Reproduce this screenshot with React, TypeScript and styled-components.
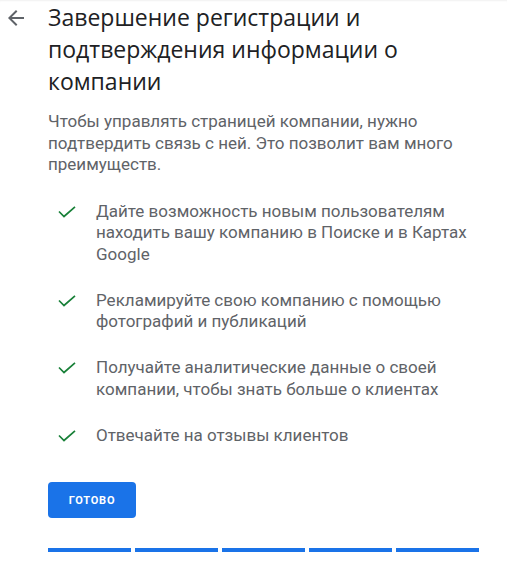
import React from 'react'
import styled, { createGlobalStyle } from 'styled-components'

const GlobalStyle = createGlobalStyle`
  html, body {
    margin: 0;
    padding: 0;
    background: #fff;
  }
`

const Page = styled.div`
  display: grid;
  grid-template-columns: 48px 431px;
  width: 507px;
  height: 562px;
  overflow: hidden;
  background: #fff;
  box-shadow: inset 0 2px 2px -1px rgba(0, 0, 0, 0.06);
`

const BackButton = styled.button`
  align-self: start;
  width: 24px;
  height: 24px;
  margin: 6px 0 0 4px;
  padding: 0;
  border: 0;
  background: none;
  color: #5f6368;
  cursor: pointer;
`

const Content = styled.div`
  display: flex;
  flex-direction: column;
`

const Title = styled.h1`
  margin: 0;
  padding-top: 1px;
  font-family: 'Open Sans', sans-serif;
  font-size: 23px;
  font-weight: 400;
  line-height: 32px;
  color: #202124;
`

const Lead = styled.p`
  margin: 14px 0 0;
  font-family: Roboto, sans-serif;
  font-size: 17px;
  line-height: 21.5px;
  color: #5f6368;
`

const Benefits = styled.ul`
  list-style: none;
  margin: 25px 0 0;
  padding: 0;
  display: flex;
  flex-direction: column;
  gap: 24.5px;
`

const Benefit = styled.li`
  display: grid;
  grid-template-columns: 48px 1fr;
  font-family: Roboto, sans-serif;
  font-size: 17px;
  line-height: 21.5px;
  color: #5f6368;
`

const Check = styled.svg`
  width: 18px;
  height: 12px;
  margin: 5px 0 0 10px;
`

const DoneButton = styled.button`
  align-self: flex-start;
  width: 88px;
  height: 36px;
  margin-top: 36px;
  border: 0;
  border-radius: 4px;
  background: #1a73e8;
  color: #fff;
  font-family: Roboto, sans-serif;
  font-size: 11px;
  font-weight: 700;
  letter-spacing: 0.8px;
  text-transform: uppercase;
  cursor: pointer;
`

const Steps = styled.div`
  display: grid;
  grid-template-columns: repeat(5, 83px);
  gap: 4px;
  margin-top: 30px;
`

const Step = styled.div<{ $done: boolean }>`
  height: 4px;
  background: ${p => (p.$done ? '#1a73e8' : '#dadce0')};
`

const benefits = [
  'Дайте возможность новым пользователям находить вашу компанию в Поиске и в Картах Google',
  'Рекламируйте свою компанию с помощью фотографий и публикаций',
  'Получайте аналитические данные о своей компании, чтобы знать больше о клиентах',
  'Отвечайте на отзывы клиентов',
]

const CheckIcon = () => (
  <Check viewBox="0 0 18 12" fill="none">
    <polyline points="1,5.5 6,10.5 17,0.8" stroke="#188038" strokeWidth="1.7" />
  </Check>
)

export default function App() {
  return (
    <>
      <GlobalStyle />
      <Page>
        <div>
          <BackButton aria-label="Назад">
            <svg width="24" height="24" viewBox="0 0 24 24" fill="currentColor">
              <path d="M20 11H7.83l5.59-5.59L12 4l-8 8 8 8 1.41-1.41L7.83 13H20v-2z" />
            </svg>
          </BackButton>
        </div>
        <Content>
          <Title>Завершение регистрации и подтверждения информации о компании</Title>
          <Lead>
            Чтобы управлять страницей компании, нужно подтвердить связь с ней. Это позволит вам
            много преимуществ.
          </Lead>
          <Benefits>
            {benefits.map(text => (
              <Benefit key={text}>
                <CheckIcon />
                <span>{text}</span>
              </Benefit>
            ))}
          </Benefits>
          <DoneButton>Готово</DoneButton>
          <Steps>
            {[0, 1, 2, 3, 4].map(i => (
              <Step key={i} $done />
            ))}
          </Steps>
        </Content>
      </Page>
    </>
  )
}
